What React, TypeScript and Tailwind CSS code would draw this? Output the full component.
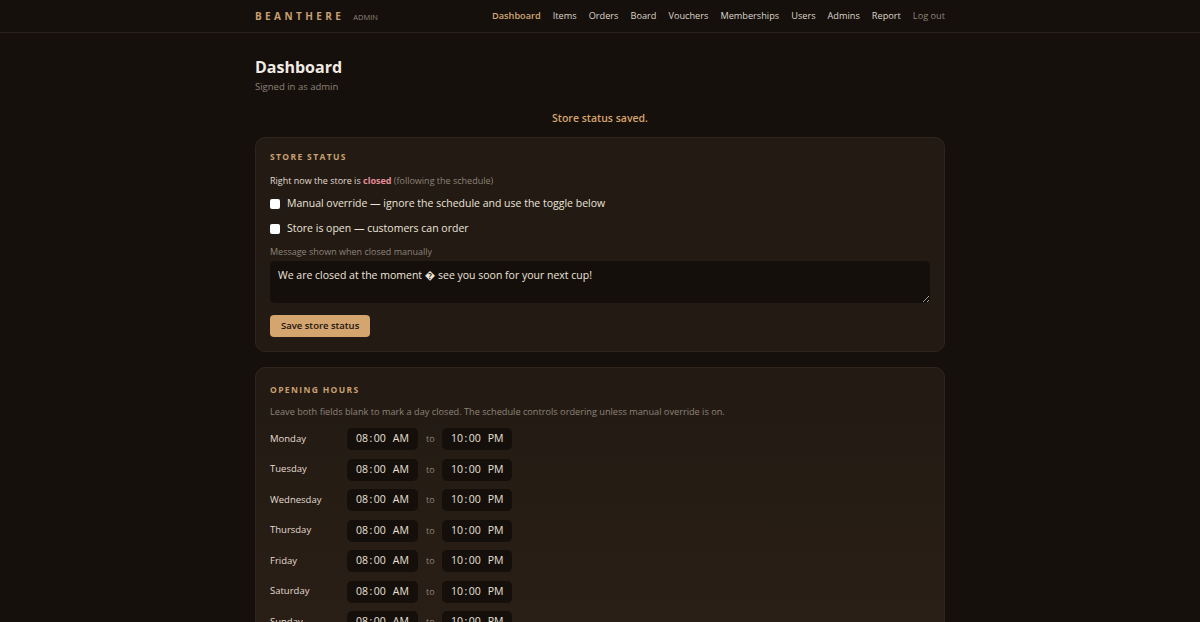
import React from "react";

const nav = ["Items", "Orders", "Board", "Vouchers", "Memberships", "Users", "Admins", "Report"];

const days = ["Monday", "Tuesday", "Wednesday", "Thursday", "Friday", "Saturday", "Sunday"];

function TimeBox({ value, period }: { value: string; period: string }) {
  return (
    <div className="flex h-[22px] items-center rounded-[5px] bg-[#150f0b] px-[9px] text-[10.5px] text-[#e9e1d8]">
      <span>{value.slice(0, 2)}</span>
      <span className="px-[1.5px]">:</span>
      <span>{value.slice(3)}</span>
      <span className="ml-[7px]">{period}</span>
    </div>
  );
}

function Check({ label }: { label: string }) {
  return (
    <div className="flex h-[16px] items-center gap-[7px] text-[10.5px] text-[#ece4da]">
      <span className="h-[10px] w-[10px] rounded-[2px] bg-white" />
      <span>{label}</span>
    </div>
  );
}

export default function App() {
  return (
    <div
      className="min-h-screen bg-[#15100c] text-[#e9e1d8]"
      style={{ fontFamily: '"Open Sans", "DejaVu Sans", sans-serif' }}
    >
      <header className="border-b border-[#2a211a]">
        <div className="mx-auto flex h-[32px] w-[690px] items-center justify-between">
          <div className="flex items-baseline gap-[9px]">
            <span className="text-[10px] font-bold tracking-[0.34em] text-[#c9a071]">BEANTHERE</span>
            <span className="text-[7.5px] text-[#8e8378]">ADMIN</span>
          </div>
          <nav className="flex items-center gap-[12px] text-[9.2px]">
            <span className="font-semibold text-[#d0a673]">Dashboard</span>
            {nav.map((n) => (
              <span key={n} className="text-[#ddd4ca]">
                {n}
              </span>
            ))}
            <span className="text-[#8e8378]">Log out</span>
          </nav>
        </div>
      </header>

      <main className="mx-auto w-[690px] pt-[24px]">
        <h1 className="text-[16px] font-bold leading-[20px] text-[#f1ebe4]">Dashboard</h1>
        <p className="mt-[3px] text-[9.5px] text-[#8e8378]">Signed in as admin</p>

        <p className="mt-[17px] text-center text-[10.5px] font-semibold text-[#d6a56c]">Store status saved.</p>

        <section className="mt-[10px] rounded-[10px] border border-[#2f251d] bg-[#221a13] px-[14px] pb-[14px] pt-[14px]">
          <h2 className="text-[8.5px] font-bold leading-[10px] tracking-[0.16em] text-[#c9a071]">STORE STATUS</h2>
          <p className="mt-[12px] text-[9px] leading-[14px] text-[#e3dbd1]">
            Right now the store is <span className="font-bold text-[#e58e9a]">closed</span>{" "}
            <span className="text-[#8e8378]">(following the schedule)</span>
          </p>
          <div className="mt-[8px] flex flex-col gap-[9px]">
            <Check label="Manual override — ignore the schedule and use the toggle below" />
            <Check label="Store is open — customers can order" />
          </div>
          <p className="mt-[9px] text-[9px] leading-[12px] text-[#8e8378]">Message shown when closed manually</p>
          <textarea
            className="mt-[3px] block h-[42px] w-full rounded-[5px] bg-[#150f0b] px-[8px] py-[6px] text-[10.5px] leading-[16px] text-[#ece4da] outline-none"
            defaultValue="We are closed at the moment � see you soon for your next cup!"
          />
          <button className="mt-[12px] block h-[22px] rounded-[4px] bg-[#d4a56e] px-[11px] text-[9.5px] font-semibold text-[#1c140e]">
            Save store status
          </button>
        </section>

        <section className="mt-[15px] rounded-[10px] border border-[#2f251d] bg-gradient-to-b from-[#221a13] to-[#2a1f16] px-[14px] pb-[15px] pt-[17px]">
          <h2 className="text-[8.5px] font-bold leading-[10px] tracking-[0.16em] text-[#c9a071]">OPENING HOURS</h2>
          <p className="mt-[11px] text-[9.2px] leading-[12px] text-[#8e8378]">
            Leave both fields blank to mark a day closed. The schedule controls ordering unless manual override is on.
          </p>
          <div className="mt-[10px] flex flex-col gap-[8.5px]">
            {days.map((d) => (
              <div key={d} className="flex items-center">
                <span className="w-[77px] text-[9.5px] text-[#e3dbd1]">{d}</span>
                <TimeBox value="08:00" period="AM" />
                <span className="w-[25px] text-center text-[9px] text-[#8e8378]">to</span>
                <div className="-ml-[1px]">
                  <TimeBox value="10:00" period="PM" />
                </div>
              </div>
            ))}
          </div>
        </section>
      </main>
    </div>
  );
}
